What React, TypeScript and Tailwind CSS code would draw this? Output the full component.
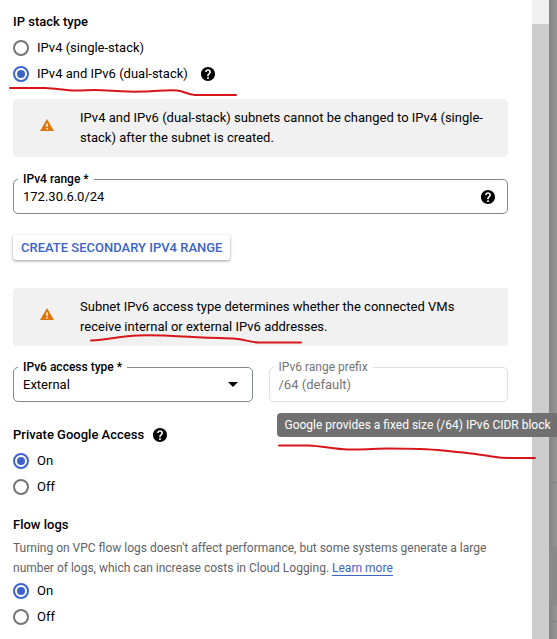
import { useId, useState } from 'react';
import type { ReactNode } from 'react';
import { clsx } from 'clsx';

const HelpIcon = () => (
    <svg viewBox="2 2 20 20" className="size-[14px] shrink-0 fill-black" aria-label="Help">
        <path d="M12 2C6.480 2 2 6.480 2 12s4.480 10 10 10 10-4.480 10-10S17.520 2 12 2zm1.200 17h-2.400v-2.400h2.400V19zm2.100-7.600-.9.920C13.500 13.200 13.200 13.800 13.200 15.200h-2.400v-.6c0-1.100.45-2.100 1.170-2.830l1.240-1.260c.37-.36.590-.86.590-1.410 0-1.100-.8-1.800-1.800-1.800s-1.900.7-1.900 1.900H7.800C7.800 6.800 9.700 5.200 12 5.200s4.200 1.600 4.200 3.900c0 .9-.36 1.720-.9 2.300z" />
    </svg>
);

const WarningIcon = () => (
    <svg viewBox="0 0 14 12" className="h-3 w-[14px] shrink-0" aria-label="Warning">
        <path d="M7 0 14 12H0z" fill="#dd7610" />
        <path d="M6.300 4.500h1.400v3.500H6.300zM6.300 9h1.400v1.400H6.300z" fill="#fff" />
    </svg>
);

// Hand-drawn underline laid over the form
const Marker = ({ d, className }: { d: string; className: string }) => (
    <svg className={clsx('pointer-events-none absolute z-20 overflow-visible', className)} aria-hidden="true">
        <path d={d} fill="none" stroke="#d8151b" strokeWidth="2" strokeLinecap="round" />
    </svg>
);

const Alert = ({ children }: { children: ReactNode }) => (
    <div className="flex items-start gap-[26px] rounded bg-[#f1f1f1] py-[9px] pr-5 pl-[27px] leading-5">
        <span className="pt-[11px]">
            <WarningIcon />
        </span>
        <p className="relative">{children}</p>
    </div>
);

interface RadioGroupProps {
    name: string;
    options: string[];
    initial: string;
    help?: string;
}

const RadioGroup = ({ name, options, initial, help }: RadioGroupProps) => {
    const [value, setValue] = useState(initial);

    return (
        <>
            {options.map((option) => (
                <div key={option} className="flex h-[26px] items-center gap-[13px]">
                    <label className="flex items-center gap-2">
                        <input
                            type="radio"
                            name={name}
                            checked={value === option}
                            onChange={() => setValue(option)}
                            className="grid size-4 appearance-none place-content-center rounded-full border-2 border-[#757575] before:size-2 before:rounded-full checked:border-[#3c63ce] checked:before:bg-[#3c63ce]"
                        />
                        {option}
                    </label>
                    {help === option && <HelpIcon />}
                </div>
            ))}
        </>
    );
};

interface FieldProps {
    label: string;
    disabled?: boolean;
    children: (id: string) => ReactNode;
}

const Field = ({ label, disabled, children }: FieldProps) => {
    const id = useId();

    return (
        <div
            className={clsx(
                'relative flex h-[35px] flex-1 items-center rounded-[5px] border',
                disabled ? 'border-[#e0e0e0] text-[#757575]' : 'border-[#80868b]'
            )}
        >
            <label
                htmlFor={id}
                className={clsx('absolute -top-[9px] left-1 bg-white px-[5px] text-xs leading-4', !disabled && 'font-medium')}
            >
                {label}
            </label>
            {children(id)}
        </div>
    );
};

const App = () => (
    <div className="flex min-h-screen overflow-hidden bg-white font-[Roboto,sans-serif] text-[13px] text-black">
        <main className="min-w-0 flex-1 pt-3 pr-6 pl-[13px]">
            <fieldset className="relative">
                <legend className="h-[23px] leading-5 font-medium">IP stack type</legend>
                <RadioGroup
                    name="stack"
                    options={['IPv4 (single-stack)', 'IPv4 and IPv6 (dual-stack)']}
                    initial="IPv4 and IPv6 (dual-stack)"
                    help="IPv4 and IPv6 (dual-stack)"
                />
                <Marker
                    className="top-[53px] -left-1 h-3 w-[228px]"
                    d="M1 0H36C48 .5 56 2.500 67 2.500S85 1.500 98 2.500 120 4 135 3.500 160 1.500 168 2.500 178 6.500 186 7H227"
                />
            </fieldset>

            <div className="mt-3">
                <Alert>
                    IPv4 and IPv6 (dual-stack) subnets cannot be changed to IPv4 (single-stack) after the subnet is
                    created.
                </Alert>
            </div>

            <div className="mt-[22px] flex">
                <Field label="IPv4 range *">
                    {(id) => (
                        <>
                            <input id={id} defaultValue="172.30.6.0/24" className="min-w-0 flex-1 pl-[9px] outline-none" />
                            <span className="mr-3">
                                <HelpIcon />
                            </span>
                        </>
                    )}
                </Field>
            </div>

            <button
                type="button"
                className="mt-[21px] block h-[25px] rounded-[3px] bg-white px-2 font-medium text-[#3c63c6] shadow-[0_1px_3px_rgba(0,0,0,0.4)]"
            >
                CREATE SECONDARY IPV4 RANGE
            </button>

            <div className="mt-7">
                <Alert>
                    Subnet IPv6 access type determines whether the connected VMs receive internal or external IPv6
                    addresses.
                    <Marker
                        className="top-[39px] left-[10px] h-3 w-[212px]"
                        d="M1 4.500C18 4 30 0 48-.5S75-.5 92 .5 130 2 143 2.500 157 6 168 6.500H211"
                    />
                </Alert>
            </div>

            <div className="mt-[21px] flex gap-4">
                <Field label="IPv6 access type *">
                    {(id) => (
                        <>
                            <select id={id} className="h-full w-full appearance-none pl-[9px] outline-none">
                                <option>External</option>
                                <option>Internal</option>
                            </select>
                            <svg viewBox="0 0 10 5" className="pointer-events-none absolute right-[14px] h-[5px] w-[10px]">
                                <path d="M0 0h10L5 5z" />
                            </svg>
                        </>
                    )}
                </Field>
                <Field label="IPv6 range prefix" disabled>
                    {(id) => (
                        <>
                            <input
                                id={id}
                                disabled
                                defaultValue="/64 (default)"
                                aria-describedby="prefix-tip"
                                className="min-w-0 flex-1 pl-[9px]"
                            />
                            <div
                                id="prefix-tip"
                                role="tooltip"
                                className="absolute top-[45px] left-[7px] z-10 rounded bg-[#707070] px-2 leading-6 whitespace-nowrap text-white"
                            >
                                <span className="text-xs">Google provides a fixed size (/64) IPv6 CIDR block</span>
                            </div>
                            <Marker
                                className="top-[76px] left-[8px] h-4 w-[258px]"
                                d="M1 1.500H30C45 2 55 5 70 5.500S90 4.500 110 4.500 150 5 165 6.500 195 9.500 208 11.500 222 14 232 14H257"
                            />
                        </>
                    )}
                </Field>
            </div>

            <fieldset className="mt-5">
                <legend className="flex h-[26px] items-center gap-[9px] leading-5 font-medium">
                    Private Google Access
                    <HelpIcon />
                </legend>
                <RadioGroup name="access" options={['On', 'Off']} initial="On" />
            </fieldset>

            <fieldset className="mt-[15px]">
                <legend className="h-[23px] leading-5 font-medium">Flow logs</legend>
                <p className="text-xs leading-5 text-[#5f6368]">
                    Turning on VPC flow logs doesn't affect performance, but some systems generate a large number of logs,
                    which can increase costs in Cloud Logging.{' '}
                    <a href="#" className="border-b border-[#3c63c6] text-[#3c63c6]">
                        Learn more
                    </a>
                </p>
                <RadioGroup name="flow" options={['On', 'Off']} initial="On" />
            </fieldset>
        </main>

        {/* Scrollbar track and thumb */}
        <div className="flex w-[17px] shrink-0 flex-col bg-[#f0f0f0] pt-6">
            <div className="flex-1 bg-[#cdcdcd]" />
        </div>

        {/* Dimmed page behind the panel */}
        <div className="flex w-2 shrink-0 flex-col bg-linear-to-r from-[#858585] to-[#959595]">
            <div className="h-[483px] border-b border-[#808080]" />
            <div className="h-16" />
            <div className="h-[58px] bg-[#8a8a8a]" />
            <div className="h-[17px] border-b border-[#808080]" />
        </div>
    </div>
);

export default App;
